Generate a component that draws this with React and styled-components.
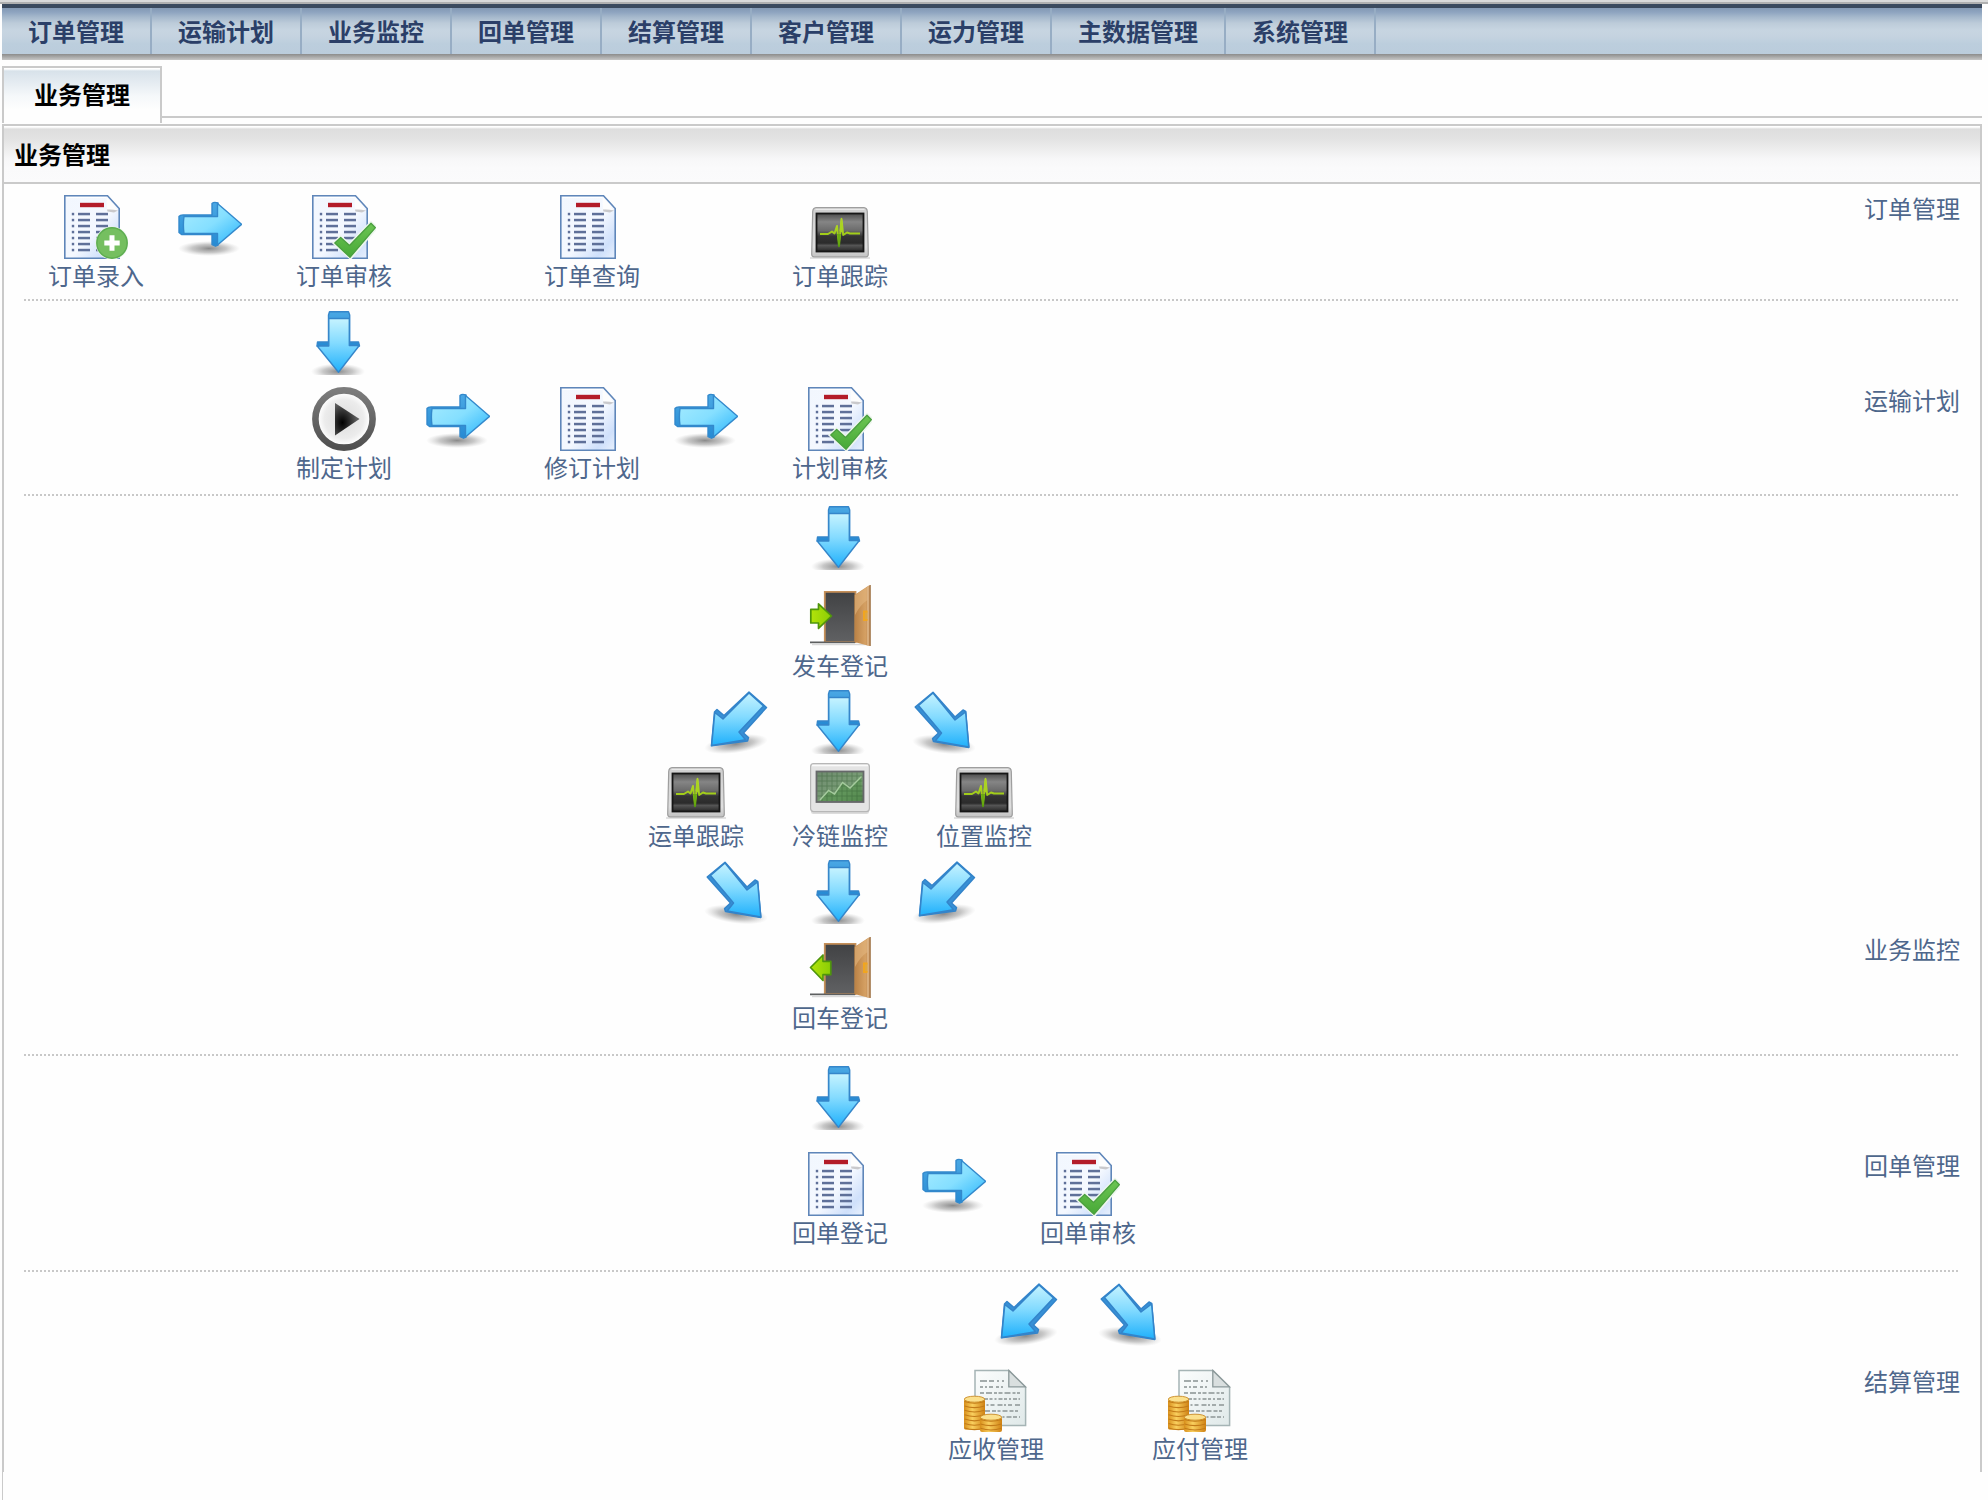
import React from "react";
import styled, { createGlobalStyle } from "styled-components";

const GlobalStyle = createGlobalStyle`
  * { box-sizing: border-box; }
  html, body { margin: 0; padding: 0; background: #fefefe; }
  body {
    font-family: "Noto Sans CJK SC", "Liberation Sans", sans-serif;
    font-size: 24px;
    overflow: hidden;
  }
`;

const Page = styled.div`
  height: 1500px;
  display: flex;
  flex-direction: column;
  background: #fefefe;
`;

const TopEdge = styled.div`
  height: 4px;
  flex: none;
  background: #dadada;
  border-bottom: 2px solid #b0b0b0;
`;

const NavBar = styled.nav`
  display: flex;
  flex: none;
  height: 50px;
  margin: 0 6px 0 2px;
  border-top: 4px solid #3b4a5e;
  background: linear-gradient(#8499b4 0, #8da3bf 4px, #a5b8cc 9px, #bccbd9 15px, #c7d5e1 22px, #c5d3e0 28px, #bccedd 36px, #bbccdc 100%);
`;

const NavItem = styled.a`
  padding: 0 26px;
  border-right: 2px solid #97adc4;
  line-height: 46px;
  font-weight: 700;
  color: #2b3f68;
  white-space: nowrap;
`;

const NavShadow = styled.div`
  flex: none;
  height: 6px;
  margin: 0 6px 0 2px;
  background: linear-gradient(#8c8c8c, #c6c6c6);
`;

const TabStrip = styled.div`
  display: flex;
  flex: none;
  align-items: flex-start;
  height: 58px;
  margin: 6px 6px 0 2px;
`;

const Tab = styled.div`
  width: 160px;
  height: 57px;
  border: 2px solid #cacaca;
  border-bottom: 0;
  padding-left: 30px;
  line-height: 52px;
  font-weight: 700;
  color: #000;
  background: linear-gradient(#fff 0, #fff 1px, #d8e2ea 3px, #e4ebf1 14px, #f5f8fa 28px, #fefefe 42px);
`;

const TabRule = styled.div`
  flex: 1;
  height: 52px;
  border-bottom: 2px solid #cacaca;
`;

const Panel = styled.section`
  flex: none;
  height: 1348px;
  margin: 0 6px 0 2px;
  border: 2px solid #cacaca;
  border-bottom: 0;
`;

const PanelTitle = styled.h1`
  height: 58px;
  margin: 0;
  padding: 0 0 0 10px;
  border-bottom: 2px solid #cacaca;
  font-size: 24px;
  font-weight: 700;
  line-height: 56px;
  color: #000;
  background: linear-gradient(#fff 0, #fff 1px, #dedede 3px, #e2e2e2 12px, #ededed 23px, #f7f7f8 33px, #fafafb 42px, #fbfbfc 100%);
`;

const Footer = styled.div`
  flex: 1;
  margin-left: 2px;
  border-left: 1px solid #cacaca;
`;

const Stage = styled.div`
  display: flex;
  justify-content: space-between;
  height: ${(p) => p.$height}px;
  margin: 0 22px 0 20px;
  padding-top: ${(p) => p.$pad}px;
  border-bottom: ${(p) => (p.$last ? "0" : "2px dotted #c8c8c8")};
`;

const StageName = styled.div`
  margin-top: ${(p) => p.$top}px;
  margin-right: -2px;
  line-height: 32px;
  color: #4e678c;
`;

const Flow = styled.div`
  display: flex;
  flex-direction: column;
`;

const Line = styled.div`
  display: flex;
  align-items: flex-start;
  gap: ${(p) => p.$gap || 0}px;
  margin-top: ${(p) => p.$top || 0}px;
  padding-left: ${(p) => p.$indent}px;
`;

const Step = styled.a`
  display: flex;
  flex-direction: column;
  width: 96px;
  height: 98px;
  padding-left: 16px;
`;

const StepLabel = styled.span`
  margin-left: -16px;
  line-height: 32px;
  color: #4e678c;
  white-space: nowrap;
`;

const Link = styled.div`
  width: 152px;
  padding-left: 34px;
`;

const Glyph = styled.svg`
  display: block;
  width: 64px;
  height: 64px;
  flex: none;
`;

const SharedDefs = styled.svg`
  position: absolute;
  width: 0;
  height: 0;
`;

const Icon = ({ children }) => <Glyph viewBox="0 0 64 64">{children}</Glyph>;

const Defs = () => (
  <SharedDefs>
    <defs>
      <linearGradient id="blueV" x1="0" y1="0" x2="0" y2="1">
        <stop offset="0" stopColor="#c6f3ff" />
        <stop offset=".45" stopColor="#84dbff" />
        <stop offset="1" stopColor="#1fb0fb" />
      </linearGradient>
      <linearGradient id="blueH" x1="0" y1="0" x2="1" y2="1">
        <stop offset="0" stopColor="#a8ecff" />
        <stop offset=".5" stopColor="#85dfff" />
        <stop offset="1" stopColor="#25b2fb" />
      </linearGradient>
      <linearGradient id="side" x1="0" y1="0" x2="0" y2="1">
        <stop offset="0" stopColor="#4aa8e4" />
        <stop offset="1" stopColor="#268ad3" />
      </linearGradient>
      <radialGradient id="shade">
        <stop offset="0" stopColor="#444" stopOpacity=".62" />
        <stop offset=".55" stopColor="#666" stopOpacity=".36" />
        <stop offset="1" stopColor="#999" stopOpacity="0" />
      </radialGradient>
      <linearGradient id="sheet" x1="0" y1="0" x2="1" y2="1">
        <stop offset="0" stopColor="#f2f7fe" />
        <stop offset=".55" stopColor="#f4f8ff" />
        <stop offset=".82" stopColor="#cfe0fb" />
        <stop offset="1" stopColor="#e9f1fd" />
      </linearGradient>
      <linearGradient id="tick" x1="0" y1="0" x2="0" y2="1">
        <stop offset="0" stopColor="#6cc552" />
        <stop offset="1" stopColor="#48a938" />
      </linearGradient>
      <radialGradient id="dial">
        <stop offset="0" stopColor="#dcdcdc" />
        <stop offset=".75" stopColor="#ececec" />
        <stop offset="1" stopColor="#fff" />
      </radialGradient>
      <linearGradient id="ring" x1="0" y1="0" x2="0" y2="1">
        <stop offset="0" stopColor="#7c7c7c" />
        <stop offset="1" stopColor="#505050" />
      </linearGradient>
      <radialGradient id="play" cx=".3" cy=".6" r=".6">
        <stop offset="0" stopColor="#000" />
        <stop offset=".5" stopColor="#2c2c2c" />
        <stop offset="1" stopColor="#5e5e5e" />
      </radialGradient>
      <linearGradient id="wood" x1="0" y1="0" x2="1" y2="0">
        <stop offset="0" stopColor="#b98145" />
        <stop offset=".7" stopColor="#d5a063" />
        <stop offset="1" stopColor="#b98550" />
      </linearGradient>
      <linearGradient id="hall" x1="0" y1="0" x2="0" y2="1">
        <stop offset="0" stopColor="#414244" />
        <stop offset="1" stopColor="#606163" />
      </linearGradient>
      <linearGradient id="lime" x1="0" y1="0" x2="1" y2="0">
        <stop offset="0" stopColor="#b2e40a" />
        <stop offset="1" stopColor="#8bcc06" />
      </linearGradient>
      <linearGradient id="bezel" x1="0" y1="0" x2="0" y2="1">
        <stop offset="0" stopColor="#cfcfcf" />
        <stop offset=".8" stopColor="#dedede" />
        <stop offset="1" stopColor="#c2c2c2" />
      </linearGradient>
      <linearGradient id="crt" x1="0" y1="0" x2="0" y2="1">
        <stop offset="0" stopColor="#4c4c4c" />
        <stop offset=".22" stopColor="#858585" />
        <stop offset=".45" stopColor="#6b6b6b" />
        <stop offset=".6" stopColor="#343434" />
        <stop offset=".78" stopColor="#2b2b2b" />
        <stop offset=".84" stopColor="#555" />
        <stop offset="1" stopColor="#262626" />
      </linearGradient>
      <linearGradient id="pulse" x1="0" y1="0" x2="0" y2="1">
        <stop offset="0" stopColor="#b9dc28" />
        <stop offset=".6" stopColor="#9fcb18" />
        <stop offset="1" stopColor="#4f9908" />
      </linearGradient>
      <linearGradient id="field" x1="0" y1="0" x2="1" y2="1">
        <stop offset="0" stopColor="#6f8a6f" />
        <stop offset=".65" stopColor="#7ba078" />
        <stop offset="1" stopColor="#4b7548" />
      </linearGradient>
      <linearGradient id="pale" x1="0" y1="0" x2="1" y2="1">
        <stop offset="0" stopColor="#fbfdfd" />
        <stop offset="1" stopColor="#e0e9e9" />
      </linearGradient>
      <linearGradient id="gold" x1="0" y1="0" x2="1" y2="0">
        <stop offset="0" stopColor="#d88f1b" />
        <stop offset=".4" stopColor="#f9cf5e" />
        <stop offset="1" stopColor="#cf8113" />
      </linearGradient>
    </defs>
  </SharedDefs>
);

const RightArrow = () => (
  <Icon>
    <ellipse cx="31" cy="53.5" rx="31" ry="7.5" fill="url(#shade)" />
    <g stroke="#3389cc" strokeWidth="1.4" strokeLinejoin="round">
      <path d="M1 21.5Q2 20 5 20H34V8.5Q36 6.5 40 8V50L37.5 51.2L34 49.5V39.5H3.5L1 37.5Z" fill="url(#side)" />
      <path d="M6 21.5H39.5V8.5L63.6 29.3L39.5 50V38.5H6Q4.8 30 6 21.5Z" fill="url(#blueH)" />
    </g>
  </Icon>
);

const DownArrow = () => (
  <Icon>
    <ellipse cx="30" cy="60.5" rx="27" ry="8" fill="url(#shade)" />
    <g stroke="#3586ca" strokeWidth="1.4" strokeLinejoin="round">
      <path d="M21.5 .7H40.5L41.7 4V31H50.5L51.5 35H9L9.5 31H20.5V4Z" fill="url(#side)" />
      <path d="M20.8 7.5H41.3V34.5H51.3L30.5 61.3L9.2 35H20.8Z" fill="url(#blueV)" />
    </g>
  </Icon>
);

const DownLeftArrow = () => (
  <Icon>
    <ellipse cx="32" cy="54" rx="32" ry="9" fill="url(#shade)" transform="rotate(-8 32 54)" />
    <g stroke="#3384ca" strokeWidth="1.5" strokeLinejoin="round">
      <path d="M45 2L62.5 17.5L39.5 43L44.5 47.5L43.5 51L7.5 55.8L10.5 22L13 19.5L20 25.5Z" fill="#3790d6" />
      <path d="M45 3L59.5 16L35 42L41.5 49.8L7.6 55.5L10.8 22.5L19 29Z" fill="url(#blueV)" />
    </g>
  </Icon>
);

const DownRightArrow = () => (
  <Icon>
    <ellipse cx="32" cy="54.5" rx="32" ry="9" fill="url(#shade)" transform="rotate(7 32 54.5)" />
    <g stroke="#3384ca" strokeWidth="1.5" strokeLinejoin="round">
      <path d="M21 2.3L43 27L51 20L53.7 21.5L56.8 57.4L21.5 51.5L20.6 48.5L26.5 43L3.2 17Z" fill="#3790d6" />
      <path d="M21 3L43 30L53.6 22L56.8 57L23.2 51L29.5 43L6.5 15.5Z" fill="url(#blueV)" />
    </g>
  </Icon>
);

const ROWS = [17.8, 23.8, 29.8, 35.8, 41.8, 47.8, 53.8];

const Sheet = () => (
  <>
    <path d="M.8 .8H43.5L55.2 13.5V63.2H.8Z" fill="url(#sheet)" stroke="#5f86b9" strokeWidth="1.6" />
    <path d="M2.5 2.5H42" stroke="#fff" />
    <path d="M42.5 2L43 14.5L53.5 15.5Q50 9 42.5 2Z" fill="#fdfdfd" />
    <path d="M43 14.5Q48 14 54 15.5L50 17.5L43.5 16.5Z" fill="#c9c9cc" />
    <rect x="16" y="7.8" width="24" height="4.4" fill="#b31c29" />
    {ROWS.map((y) => (
      <g key={y} fill="#5f7099">
        <rect x="7.8" y={y} width="2.4" height="2.5" />
        <rect x="14" y={y} width="12" height="2.5" />
        <rect x="32" y={y} width="12" height="2.5" />
      </g>
    ))}
  </>
);

const SheetIcon = () => (
  <Icon>
    <Sheet />
  </Icon>
);

const AddIcon = () => (
  <Icon>
    <Sheet />
    <circle cx="48" cy="48" r="16.6" fill="#eaf3ea" />
    <circle cx="48" cy="48" r="15.2" fill="#75bf60" stroke="#5cad4f" strokeWidth="1.4" />
    <path d="M48 40.3V55.7M40.3 48H55.7" stroke="#fff" strokeWidth="5" />
  </Icon>
);

const CheckIcon = () => (
  <Icon>
    <Sheet />
    <path d="M22 48L28.5 42L37.5 49.5L59 27.5L64.5 32.5L38.5 63Z" fill="none" stroke="#eef6ee" strokeWidth="3" />
    <path d="M22.8 48L28.7 42.4L37.5 50.5L59 28.3L63.4 32.7L38 62.3Z" fill="url(#tick)" stroke="#4a9f3f" strokeWidth="1.3" strokeLinejoin="round" />
  </Icon>
);

const PlayIcon = () => (
  <Icon>
    <circle cx="32" cy="32" r="26" fill="url(#dial)" />
    <circle cx="32" cy="32" r="28.6" fill="none" stroke="url(#ring)" strokeWidth="6.6" />
    <path d="M23 16L47.5 32L23 48.5Z" fill="url(#play)" />
  </Icon>
);

const DoorIcon = ({ out }) => (
  <Icon>
    <path d="M16.8 57V6.8H47.5V57Z" fill="url(#hall)" stroke="#c58f58" strokeWidth="1.8" />
    <path d="M2 57.3H47" stroke="#5d5f60" strokeWidth="1.8" />
    <path d="M4 59.5H60" stroke="#d9d9d9" strokeWidth="1.5" />
    <path d="M46.5 10L60 1L62 0V61L59.5 60.5L46.5 57Z" fill="url(#wood)" />
    <path d="M47 10L59.5 2V15Q52 20 47 30Z" fill="#e3b67f" opacity=".6" />
    <path d="M60 1V60.5" stroke="#e6c297" strokeWidth="1.2" />
    <path d="M62.3 0V61" stroke="#9f7446" strokeWidth="1" />
    <path d="M59.5 26.5H56V35H59.5" fill="#dfa640" stroke="#f1a51f" strokeWidth="2" />
    <path
      d={out ? "M2.5 30.5L15 18V24.3H22.8V37.7H15V43.5Z" : "M2.8 24.3H10.5V18.8L23.5 31L10.5 43.3V38H2.8Z"}
      fill="url(#lime)"
      stroke="#4f950c"
      strokeWidth="1.7"
      strokeLinejoin="round"
    />
  </Icon>
);

const PulseIcon = () => (
  <Icon>
    <path d="M2 63H62" stroke="#e2e2e2" strokeWidth="2" />
    <path d="M8 12.7H56Q59 13 59.3 16.5L60.3 59Q60.3 61.8 58 61.8H6Q3.7 61.8 3.7 59L4.7 16.5Q5 13 8 12.7Z" fill="url(#bezel)" stroke="#9e9e9e" strokeWidth="1.2" />
    <path d="M7.5 14.3H56.5" stroke="#efefef" />
    <rect x="8.5" y="18.5" width="47" height="38" fill="url(#crt)" stroke="#161616" strokeWidth="1.8" />
    <path d="M12 39H20L24 36.5L26.5 38.5L29 31L31 51L33.5 24L35.2 40L39 37.5L42 38.5H52" fill="none" stroke="url(#pulse)" strokeWidth="2" strokeLinejoin="round" />
    <path d="M29 39L31 53L33 39Z" fill="#6bab12" />
    <path d="M31.5 36L33.5 22L35 38Z" fill="#a9d321" />
  </Icon>
);

const ChartIcon = () => (
  <Icon>
    <rect x="3" y="54" width="58" height="5" rx="2.5" fill="#dcdcdc" />
    <rect x="2.6" y="8.6" width="58.8" height="48" rx="3" fill="#e4e4e4" stroke="#b7b7b7" strokeWidth="1.2" />
    <path d="M4 10.5H60" stroke="#fafafa" strokeWidth="1.5" />
    <rect x="8.5" y="16.5" width="47" height="30.5" fill="url(#field)" stroke="#66686a" strokeWidth="1.8" />
    <path d="M12 46L20.5 35.5L26.5 39L34.5 27.5L42 33L53.5 21V46Z" fill="#55904e" opacity=".7" />
    <path d="M14 17.5V46M19 17.5V46M24 17.5V46M29 17.5V46M34 17.5V46M39 17.5V46M44 17.5V46M49 17.5V46M9.5 21H54.5M9.5 26H54.5M9.5 31H54.5M9.5 36H54.5M9.5 41H54.5" stroke="#365f36" strokeWidth=".8" opacity=".5" />
    <path d="M12 45L20.5 35.5L26.5 39L34.5 27.5L42 33L53.5 21.5" fill="none" stroke="#a5cb9d" strokeWidth="1.4" />
  </Icon>
);

const TEXT_LINES = [
  [13, 40, "7 2 5 3 2 3"],
  [19, 40, "3 2 2 2 4 3"],
  [25, 56, "4 2 6 2 3 1.5"],
  [31, 56, "2 2 4 1.5 3 2"],
  [37, 56, "5 1.5 2 2 4 3"],
  [43, 56, "3 2 5 2 4 1.5"],
  [49, 56, "4 2 2 2 5 1.5"],
];

const Coins = ({ x, y, w, count }) => (
  <g>
    <rect x={x} y={y + 3} width={w} height={count * 4.4} rx="2" fill="url(#gold)" />
    {Array.from({ length: count }, (_, i) => (
      <path
        key={i}
        d={`M${x + 0.5} ${y + 5.5 + i * 4.4}Q${x + w / 2} ${y + 9 + i * 4.4} ${x + w - 0.5} ${y + 5.5 + i * 4.4}`}
        fill="none"
        stroke="#c27a18"
        strokeWidth="1.1"
      />
    ))}
    <ellipse cx={x + w / 2} cy={y + 3.2} rx={w / 2 - 0.3} ry="3" fill="#fbe08c" stroke="#c98a25" strokeWidth=".9" />
  </g>
);

const MoneyIcon = () => (
  <Icon>
    <path d="M11 2.6H45L61.6 19V57.4H11Z" fill="url(#pale)" stroke="#a5b4b5" strokeWidth="1.5" />
    {TEXT_LINES.map(([y, end, dash]) => (
      <path key={y} d={`M16 ${y}H${end}`} stroke="#a3abab" strokeWidth="2" strokeDasharray={dash} />
    ))}
    <path d="M44.8 2.6V18.8H61.4Z" fill="#d9dfdf" stroke="#8b9899" strokeWidth="1.3" />
    <Coins x={0} y={28} w={21} count={7} />
    <Coins x={16} y={46} w={22} count={3.4} />
  </Icon>
);

const Node = ({ icon, label }) => (
  <Step>
    {icon}
    <StepLabel>{label}</StepLabel>
  </Step>
);

const Next = ({ empty }) => <Link>{empty ? null : <RightArrow />}</Link>;

const MENU = ["订单管理", "运输计划", "业务监控", "回单管理", "结算管理", "客户管理", "运力管理", "主数据管理", "系统管理"];

export default function App() {
  return (
    <Page>
      <GlobalStyle />
      <Defs />
      <TopEdge />
      <NavBar>
        {MENU.map((name) => (
          <NavItem key={name}>{name}</NavItem>
        ))}
      </NavBar>
      <NavShadow />
      <TabStrip>
        <Tab>业务管理</Tab>
        <TabRule />
      </TabStrip>
      <Panel>
        <PanelTitle>业务管理</PanelTitle>

        <Stage $height={117} $pad={11}>
          <Flow>
            <Line $indent={24}>
              <Node icon={<AddIcon />} label="订单录入" />
              <Next />
              <Node icon={<CheckIcon />} label="订单审核" />
              <Next empty />
              <Node icon={<SheetIcon />} label="订单查询" />
              <Next empty />
              <Node icon={<PulseIcon />} label="订单跟踪" />
            </Line>
          </Flow>
          <StageName $top={-3}>订单管理</StageName>
        </Stage>

        <Stage $height={195} $pad={10}>
          <Flow>
            <Line $indent={284}>
              <DownArrow />
            </Line>
            <Line $indent={272} $top={12}>
              <Node icon={<PlayIcon />} label="制定计划" />
              <Next />
              <Node icon={<SheetIcon />} label="修订计划" />
              <Next />
              <Node icon={<CheckIcon />} label="计划审核" />
            </Line>
          </Flow>
          <StageName $top={73}>运输计划</StageName>
        </Stage>

        <Stage $height={560} $pad={10}>
          <Flow>
            <Line $indent={784}>
              <DownArrow />
            </Line>
            <Line $indent={768} $top={15}>
              <Node icon={<DoorIcon />} label="发车登记" />
            </Line>
            <Line $indent={680} $gap={40} $top={7}>
              <DownLeftArrow />
              <DownArrow />
              <DownRightArrow />
            </Line>
            <Line $indent={624} $gap={48} $top={1}>
              <Node icon={<PulseIcon />} label="运单跟踪" />
              <Node icon={<ChartIcon />} label="冷链监控" />
              <Node icon={<PulseIcon />} label="位置监控" />
            </Line>
            <Line $indent={680} $gap={40} $top={7}>
              <DownRightArrow />
              <DownArrow />
              <DownLeftArrow />
            </Line>
            <Line $indent={768} $top={13}>
              <Node icon={<DoorIcon out />} label="回车登记" />
            </Line>
          </Flow>
          <StageName $top={427}>业务监控</StageName>
        </Stage>

        <Stage $height={216} $pad={10}>
          <Flow>
            <Line $indent={784}>
              <DownArrow />
            </Line>
            <Line $indent={768} $top={22}>
              <Node icon={<SheetIcon />} label="回单登记" />
              <Next />
              <Node icon={<CheckIcon />} label="回单审核" />
            </Line>
          </Flow>
          <StageName $top={83}>回单管理</StageName>
        </Stage>

        <Stage $height={200} $pad={10} $last>
          <Flow>
            <Line $indent={970} $gap={40}>
              <DownLeftArrow />
              <DownRightArrow />
            </Line>
            <Line $indent={924} $gap={108} $top={22}>
              <Node icon={<MoneyIcon />} label="应收管理" />
              <Node icon={<MoneyIcon />} label="应付管理" />
            </Line>
          </Flow>
          <StageName $top={83}>结算管理</StageName>
        </Stage>
      </Panel>
      <Footer />
    </Page>
  );
}
